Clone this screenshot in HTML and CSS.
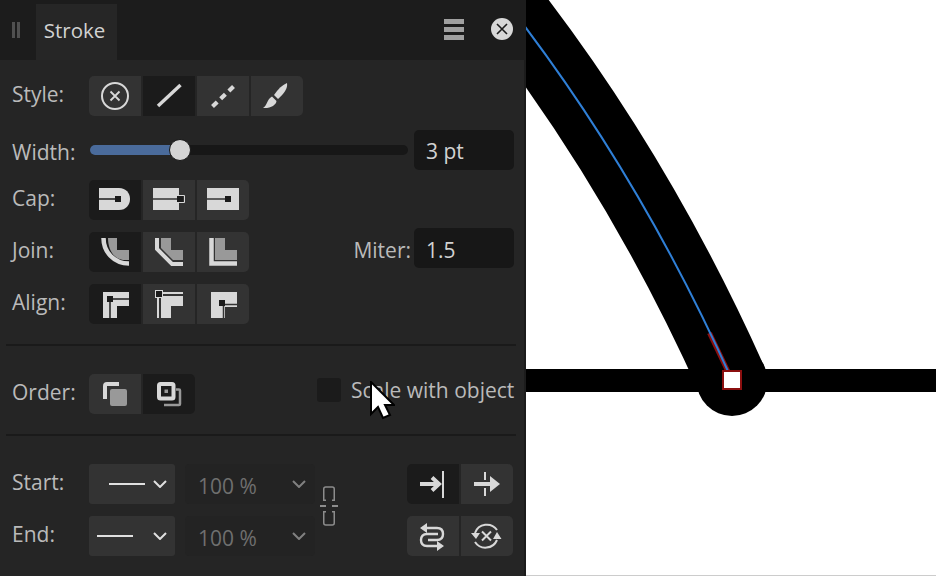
FILE: index.html
```html
<!DOCTYPE html>
<html lang="en">
<head>
    <meta charset="UTF-8">
    <meta name="viewport" content="width=device-width, initial-scale=1.0">
    <title>Stroke panel</title>
    <link rel="stylesheet" href="styles.css">
</head>
<body>
    <aside class="panel">
        <header class="panel-head">
            <span class="grip"></span>
            <div class="tab">Stroke</div>
            <div class="burger"><i></i><i></i><i></i></div>
            <svg class="close" width="24" height="24" viewBox="0 0 24 24">
                <circle cx="12" cy="12" r="11" fill="#d8d8d8"/>
                <path d="M7 7L17 17M17 7L7 17" stroke="#1c1c1c" stroke-width="1.6" fill="none"/>
            </svg>
        </header>

        <div class="panel-body">
            <div class="row row-style">
                <span class="label">Style:</span>
                <div class="seg">
                    <button class="btn"><svg viewBox="0 0 52 40"><circle class="ln" cx="26" cy="20" r="13" stroke-width="2"/><path class="ln" d="M21.500 15.500L30.500 24.500M30.500 15.500L21.500 24.500" stroke-width="1.800"/></svg></button>
                    <button class="btn on"><svg viewBox="0 0 52 40"><path class="ln" d="M15 30L37.500 9" stroke-width="3.400"/></svg></button>
                    <button class="btn"><svg viewBox="0 0 52 40"><path class="ln" d="M15.500 30.500L36.500 10.500" stroke-width="4.200" stroke-dasharray="6.500 4.800"/></svg></button>
                    <button class="btn"><svg viewBox="0 0 52 40"><path class="lt" d="M36 7C37 12 33 18 27 23L23 19C27 13 31 9 36 7Z"/><path class="lt" d="M21 20.500L25.500 25C25 29 20 32.500 12 32C16 30 16 23 21 20.500Z"/></svg></button>
                </div>
            </div>

            <div class="row row-width">
                <span class="label label-width">Width:</span>
                <div class="slider">
                    <div class="slider-fill"></div>
                    <div class="slider-thumb"></div>
                </div>
                <div class="field field-width">3 pt</div>
            </div>

            <div class="row row-cap">
                <span class="label">Cap:</span>
                <div class="seg">
                    <button class="btn on"><svg viewBox="0 0 52 40"><path class="lt" d="M10 8H30C37 8 41 13 41 19C41 25 37 30 30 30H10Z"/><path class="cut" d="M10 19H28" stroke-width="1.500"/><rect class="sq" x="26" y="16" width="6" height="6"/></svg></button>
                    <button class="btn"><svg viewBox="0 0 52 40"><rect class="lt" x="10" y="8" width="26" height="22"/><path class="ln" d="M34 15.500H41.500V22.500H34" stroke-width="1"/><path class="cut" d="M10 19H34" stroke-width="1.500"/><rect class="sq" x="34" y="16" width="6" height="6"/></svg></button>
                    <button class="btn"><svg viewBox="0 0 52 40"><rect class="lt" x="10" y="8" width="32" height="22"/><path class="cut" d="M10 19H28" stroke-width="1.500"/><rect class="sq" x="28" y="16" width="6" height="6"/></svg></button>
                </div>
            </div>

            <div class="row row-join">
                <span class="label">Join:</span>
                <div class="seg">
                    <button class="btn on"><svg viewBox="0 0 52 40"><path class="gr" d="M19 6H28V18H40V28H34C25 27 19 18 19 6Z"/><path class="ln" d="M14.500 6C14.500 20 25 31.500 40 31.500" stroke-width="4.500"/></svg></button>
                    <button class="btn"><svg viewBox="0 0 52 40"><path class="gr" d="M18 6H28V18H40V28H30L18 16Z"/><path class="ln" d="M14 6V17L29 32H40" stroke-width="4"/></svg></button>
                    <button class="btn"><svg viewBox="0 0 52 40"><path class="gr" d="M18 6H28V18H40V28H18Z"/><path class="ln" d="M14.500 6V31.500H40" stroke-width="4.500"/></svg></button>
                </div>
                <span class="miter-label">Miter:</span>
                <div class="field field-miter">1.5</div>
            </div>

            <div class="row row-align">
                <span class="label">Align:</span>
                <div class="seg">
                    <button class="btn on"><svg viewBox="0 0 52 40"><path class="lt" d="M14 8H40V22H28V34H14Z"/><path class="cut" d="M21 34V15H40" stroke-width="1.500"/><rect class="sq" x="18" y="12" width="6" height="6"/></svg></button>
                    <button class="btn"><svg viewBox="0 0 52 40"><path class="lt" d="M18 12H40V22H28V34H18Z"/><path class="ln" d="M40 9H15V34" stroke-width="2"/><rect class="sq" x="12.500" y="6.500" width="7" height="7" stroke="#d8d8d8"/></svg></button>
                    <button class="btn"><svg viewBox="0 0 52 40"><path class="lt" d="M14 8H40V23H28V34H14Z"/><path class="cut" d="M26.500 34V20.500H40" stroke-width="1.500"/><rect class="sq" x="22" y="16" width="6" height="6"/></svg></button>
                </div>
            </div>

            <hr class="rule rule-one">

            <div class="row row-order">
                <span class="label">Order:</span>
                <div class="seg">
                    <button class="btn"><svg viewBox="0 0 52 40"><path class="ln" d="M30 10H18Q16 10 16 12V25" stroke-width="4"/><rect class="gr" x="21" y="15" width="17" height="17" rx="2"/></svg></button>
                    <button class="btn on"><svg viewBox="0 0 52 40"><path class="ln gl" d="M33 15.500H36Q37 15.500 37 16.500V30Q37 31 36 31H21" stroke-width="2.500"/><rect class="ln" x="16" y="10" width="14.500" height="14.500" rx="1.500" stroke-width="4"/><rect class="gr" x="21.500" y="15.500" width="3.500" height="3.500"/></svg></button>
                </div>
                <span class="check"></span>
                <span class="check-label">Scale with object</span>
            </div>

            <hr class="rule rule-two">

            <div class="ends">
                <div class="ends-left">
                    <div class="row">
                        <span class="label">Start:</span>
                        <div class="select select-start">
                            <span class="dash"></span>
                            <svg class="chev" width="14" height="8" viewBox="0 0 14 8"><path d="M1 1L7 7L13 1"/></svg>
                        </div>
                        <div class="percent"><span class="percent-val">100 %</span>
                            <svg class="chev" width="14" height="8" viewBox="0 0 14 8"><path d="M1 1L7 7L13 1"/></svg>
                        </div>
                    </div>
                    <div class="row">
                        <span class="label">End:</span>
                        <div class="select select-end">
                            <span class="dash"></span>
                            <svg class="chev" width="14" height="8" viewBox="0 0 14 8"><path d="M1 1L7 7L13 1"/></svg>
                        </div>
                        <div class="percent"><span class="percent-val">100 %</span>
                            <svg class="chev" width="14" height="8" viewBox="0 0 14 8"><path d="M1 1L7 7L13 1"/></svg>
                        </div>
                    </div>
                </div>

                <svg class="link" width="18" height="40" viewBox="0 0 18 40">
                    <path d="M6 14.250H3.750V3Q3.750 1 5.750 1H12.250Q14.250 1 14.250 3V14.250H12M6 25.750H3.750V37Q3.750 39 5.750 39H12.250Q14.250 39 14.250 37V25.750H12" stroke="#8c8c8c" stroke-width="1.500" fill="none"/>
                    <path d="M0 20H6M12 20H18" stroke="#b0b0b0" stroke-width="1.500"/>
                </svg>

                <div class="ends-right">
                    <button class="btn on"><svg viewBox="0 0 52 40"><path class="ln" d="M13 20H32M25 13.500L32 20L25 26.500" stroke-width="4"/><path class="ln" d="M36 7V34" stroke-width="2"/></svg></button>
                    <button class="btn"><svg viewBox="0 0 52 40"><path class="lt" d="M13 18H29V12L39 20L29 28V22H13Z"/><path class="ln" d="M24 8V16M24 24V32" stroke-width="2"/></svg></button>
                    <button class="btn"><svg viewBox="0 0 52 40"><path class="ln" d="M18 12H30Q36 12 36 18Q36 24 30 24H21M31 18H20Q14 18 14 24Q14 30 20 30H32" stroke-width="2.400"/><path class="lt" d="M20 7V17L13 12ZM30 25V35L37 30Z"/></svg></button>
                    <button class="btn"><svg viewBox="0 0 52 40"><path class="ln" d="M14 17A12.500 12.500 0 0 1 36 14M36 24A12.500 12.500 0 0 1 14 26" stroke-width="2"/><path class="lt" d="M10 17H19L15 23ZM32 23H40.500L36 16Z"/><path class="ln" d="M21 15.500L30 24.500M30 15.500L21 24.500" stroke-width="2"/></svg></button>
                </div>
            </div>
        </div>
    </aside>

    <main class="canvas">
        <svg class="art" width="410" height="575" viewBox="526 0 410 575">
            <rect x="526" y="369" width="410" height="23" fill="#000"/>
            <circle cx="732" cy="380.500" r="35.500" fill="#000"/>
            <path d="M489.200 -19.300Q633.100 159.200 732 380" stroke="#000" stroke-width="70" fill="none"/>
            <path d="M709.500 333L732 380" stroke="#8b0f0f" stroke-width="5" fill="none"/>
            <path d="M489.200 -19.300Q633.100 159.200 732 380" stroke="#2f7fd6" stroke-width="2" fill="none"/>
            <rect x="723" y="371" width="18" height="18" fill="#fff" stroke="#8b0f0f" stroke-width="2"/>
        </svg>
    </main>

    <svg class="pointer" width="26" height="40" viewBox="0 0 26 40">
        <path d="M2 1V33L9 26L14 37L21 34L16 24H25Z" fill="#fff" stroke="#000" stroke-width="2"/>
    </svg>
</body>
</html>
```

FILE: styles.css
```css
* { box-sizing: border-box; }
body {
    font-family: "Open Sans", "Noto Sans", sans-serif;
    margin: 0;
    width: 936px;
    height: 576px;
    display: flex;
    overflow: hidden;
    background: #fff;
    color: #bababa;
    font-size: 21px;
}
.panel {
    width: 526px;
    height: 576px;
    background: #252525;
    border-right: 2px solid #1c1c1c;
    flex-shrink: 0;
}
.panel-head {
    height: 60px;
    background: #1c1c1c;
    display: flex;
    align-items: flex-end;
    margin-right: -2px;
    position: relative;
}
.grip {
    width: 8px;
    height: 16px;
    margin: 0 16px 22px 12px;
    border-left: 3px solid #505050;
    border-right: 3px solid #505050;
}
.tab {
    width: 81px;
    height: 56px;
    padding-right: 4px;
    background: #262626;
    color: #d2d2d2;
    font-size: 20.5px;
    line-height: 52px;
    text-align: center;
}
.burger {
    width: 20px;
    margin: 0 0 20px auto;
    display: flex;
    flex-direction: column;
    gap: 3px;
}
.burger i {
    display: block;
    height: 5px;
    background: #a0a0a0;
}
.close { margin: 0 12px 19px 26px; }

.panel-body { padding-top: 16px; }
.row {
    display: flex;
    align-items: center;
    height: 40px;
}
.row-width { margin-top: 14px; }
.row-cap { margin-top: 10px; }
.row-join, .row-align { margin-top: 12px; }
.label {
    width: 89px;
    padding: 0 0 4px 12px;
    flex-shrink: 0;
}
.label-width { padding: 4px 0 0 12px; }
.seg { display: flex; gap: 2px; }
.btn {
    width: 52px;
    height: 40px;
    padding: 0;
    border: none;
    background: #333;
    color: #333;
    display: block;
}
.btn.on { background: #1b1b1b; color: #1b1b1b; }
.btn svg { display: block; width: 52px; height: 40px; }
.seg .btn:first-child { border-radius: 5px 0 0 5px; }
.seg .btn:last-child { border-radius: 0 5px 5px 0; }

.lt { fill: #d8d8d8; }
.gr { fill: #999; }
.ln { fill: none; stroke: #d8d8d8; }
.ln.gl { stroke: #999; }
.cut { fill: none; stroke: currentColor; }
.sq { fill: #1b1b1b; }

.slider {
    width: 318px;
    height: 10px;
    margin-left: 1px;
    background: #171717;
    border-radius: 5px;
    position: relative;
}
.slider-fill {
    width: 84px;
    height: 10px;
    background: #4a6b9b;
    border-radius: 5px 0 0 5px;
}
.slider-thumb {
    position: absolute;
    left: 79px;
    top: -6px;
    width: 22px;
    height: 22px;
    border-radius: 50%;
    background: #d4d4d4;
    border: 1px solid #171717;
}
.field {
    width: 100px;
    height: 40px;
    background: #171717;
    border-radius: 5px;
    color: #d2d2d2;
    line-height: 43px;
    padding-left: 12px;
}
.field-width { margin-left: 6px; }
.miter-label { margin: 0 3px 4px auto; }
.field-miter { margin: 0 10px 8px 0; line-height: 44px; }

.rule {
    margin: 0 8px 0 6px;
    height: 2px;
    border: none;
    background: #1a1a1a;
}
.rule-one { margin-top: 20px; }
.row-order { margin-top: 28px; }
.rule-two { margin-top: 20px; }
.check {
    width: 24px;
    height: 24px;
    margin: 0 0 8px 122px;
    background: #1b1b1b;
    border-radius: 3px;
}
.check-label { margin: 0 0 8px 10px; white-space: nowrap; }

.ends {
    margin-top: 28px;
    display: flex;
    align-items: center;
}
.ends-left {
    width: 315px;
    display: flex;
    flex-direction: column;
    gap: 12px;
}
.select {
    width: 86px;
    height: 40px;
    background: #333;
    border-radius: 3px;
    display: flex;
    align-items: center;
    position: relative;
}
.select .chev { margin-left: auto; margin-right: 8px; }
.dash { width: 36px; height: 2px; background: #e0e0e0; }
.select-start .dash { margin-left: 20px; }
.select-end .dash { margin-left: 8px; }
.chev path { fill: none; stroke: #e0e0e0; stroke-width: 2; }
.percent {
    width: 130px;
    height: 40px;
    margin-left: 10px;
    background: #232323;
    border-radius: 4px;
    color: #6f6f6f;
    padding-left: 13px;
    display: flex;
    align-items: center;
}
.percent-val { margin-top: 3px; }
.percent .chev { margin-left: auto; margin-right: 9px; }
.percent .chev path { stroke: #808080; }
.link { margin: 0 0 8px 5px; }
.ends-right {
    margin-left: 69px;
    display: grid;
    grid-template-columns: 52px 52px;
    gap: 12px 2px;
}
.ends-right .btn:nth-child(odd) { border-radius: 5px 0 0 5px; }
.ends-right .btn:nth-child(even) { border-radius: 0 5px 5px 0; }

.canvas {
    width: 410px;
    height: 576px;
    flex-shrink: 0;
    border-bottom: 1px solid #ccc;
}
.art { display: block; }
.pointer {
    position: absolute;
    left: 369px;
    top: 381px;
}
```
